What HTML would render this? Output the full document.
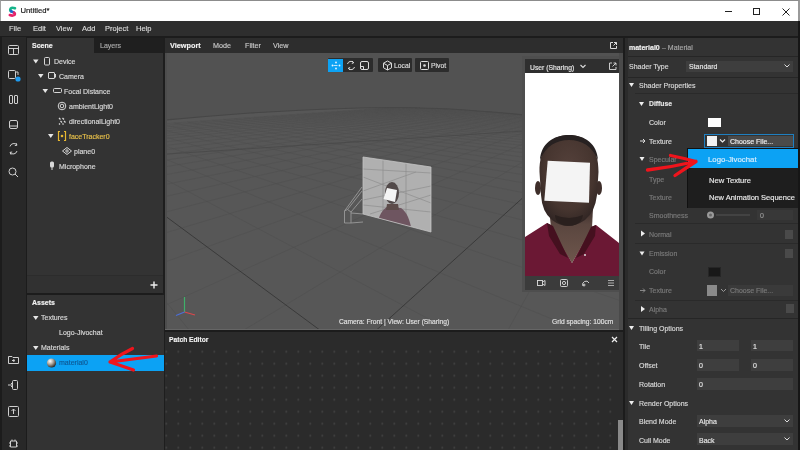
<!DOCTYPE html>
<html><head><meta charset="utf-8">
<style>
*{box-sizing:border-box;margin:0;padding:0}
html,body{width:800px;height:450px;overflow:hidden;background:#1e1e1e;font-family:"Liberation Sans",sans-serif;}
body{will-change:transform}
.a{position:absolute}
svg{position:absolute;overflow:visible}
.t{position:absolute;white-space:nowrap;color:#dadada;font-size:7px;line-height:9px;-webkit-text-stroke:0.15px currentColor}
.b{font-weight:bold;color:#f2f2f2}
.d{color:#7a7a7a}
#title{left:0;top:0;width:800px;height:21px;background:#fff;border-top:1px solid #8c8c8c;border-right:2px solid #9a9a9a;border-left:1px solid #a0a0a0}
#menu{left:0;top:21px;width:800px;height:15px;background:#2e2e2e}
#side{left:0;top:37px;width:27px;height:413px;background:#282828;border-left:2px solid #1c1c1c;border-right:1px solid #1c1c1c}
#scene{left:27px;top:38px;width:136px;height:255px;background:#333}
#layers{left:94px;top:38px;width:69px;height:15px;background:#1f1f1f}
#assets{left:27px;top:294px;width:137px;height:156px;background:#333}
#vp{left:165px;top:53px;width:454px;height:277px;background:#565656;overflow:hidden}
#vph{left:165px;top:38px;width:458px;height:15px;background:#2d2d2d}
#patch{left:165px;top:332px;width:458px;height:118px;background:#262626}
#right{left:625px;top:38px;width:175px;height:412px;background:#333}
</style></head><body>
<!-- title bar -->
<div id="title" class="a">
  <svg style="left:0;top:0" width="20" height="20">
    <path d="M14 7.3 Q11 6 9.6 7.6 Q8.7 9 10 10.2" fill="none" stroke="#14b489" stroke-width="2.6" stroke-linecap="round"/>
    <path d="M10 10.2 L13 11.6" fill="none" stroke="#1a6ad0" stroke-width="2.6" stroke-linecap="round"/>
    <path d="M13 11.6 Q14.6 12.8 13.4 14 Q11.5 15.2 8.8 14" fill="none" stroke="#e6246a" stroke-width="2.6" stroke-linecap="round"/>
  </svg>
  <div class="t" style="left:19.5px;top:5px;color:#111;font-size:7.7px;line-height:10px">Untitled*</div>
  <div class="a" style="left:724px;top:10px;width:7px;height:1px;background:#222"></div>
  <div class="a" style="left:752px;top:7px;width:7px;height:7px;border:1px solid #222"></div>
  <svg style="left:781px;top:7px" width="8" height="8"><path d="M0.5 0.5 L7.5 7.5 M7.5 0.5 L0.5 7.5" stroke="#222" stroke-width="1"/></svg>
</div>
<!-- menu -->
<div id="menu" class="a">
  <div class="t" style="left:9px;top:3px;font-size:7.5px">File</div>
  <div class="t" style="left:33px;top:3px;font-size:7.5px">Edit</div>
  <div class="t" style="left:56px;top:3px;font-size:7.5px">View</div>
  <div class="t" style="left:82px;top:3px;font-size:7.5px">Add</div>
  <div class="t" style="left:105px;top:3px;font-size:7.5px">Project</div>
  <div class="t" style="left:136px;top:3px;font-size:7.5px">Help</div>
</div>
<div class="a" style="left:0;top:36px;width:800px;height:2px;background:#1c1c1c"></div>
<!-- left sidebar -->
<div id="side" class="a"></div>
<!-- scene panel -->
<div id="scene" class="a"></div>
<div id="layers" class="a"></div>
<div class="t b" style="left:32px;top:41px">Scene</div>
<div class="t" style="left:100px;top:41px;color:#aaa">Layers</div>
<!-- tree -->
<svg style="left:0;top:0" width="800" height="450">
  <g fill="#e6e6e6">
    <path d="M33 59.5 L38.5 59.5 L35.75 63.5Z"/>
    <path d="M38 74 L43.5 74 L40.75 78Z"/>
    <path d="M42.5 89 L48 89 L45.25 93Z"/>
    <path d="M48 134 L53.5 134 L50.75 138Z"/>
  </g>
  <g fill="none" stroke="#d8d8d8" stroke-width="1">
    <rect x="44.5" y="57.5" width="5" height="7.5" rx="1"/>
    <rect x="48.5" y="72.5" width="6" height="6" rx="0.5"/><path d="M55.5 74 V77.5"/>
    <rect x="53.5" y="88.5" width="8" height="4" rx="1"/>
    <circle cx="62" cy="106" r="3.8"/><circle cx="62" cy="106" r="1.8"/>
    <path d="M59 118 L60.5 119.5 M62.5 118 L64 119.5 M60.5 121 L62 122.5 M64 121 L65.5 122.5 M59 123.5 L60 124.5 M62.5 123.5 L63.5 124.5" stroke-width="1.3"/>
    <circle cx="67" cy="151" r="1.2"/><path d="M62.5 151 L67 147.5 L71.5 151 L67 154.5Z"/>
  </g>
  <g fill="none" stroke="#e8b830" stroke-width="1">
    <path d="M60 131.5 H58.5 V140.5 H60 M64 131.5 H65.5 V140.5 H64" stroke-width="1.2"/>
  </g>
  <circle cx="62" cy="136" r="1.3" fill="#e8b830"/>
  <rect x="50" y="161.5" width="4" height="6" rx="1.5" fill="#d8d8d8"/>
  <path d="M52 167 V170" stroke="#d8d8d8" stroke-width="1"/>
</svg>
<div class="t" style="left:54px;top:57px">Device</div>
<div class="t" style="left:59px;top:72px">Camera</div>
<div class="t" style="left:64px;top:87px">Focal Distance</div>
<div class="t" style="left:69px;top:102px">ambientLight0</div>
<div class="t" style="left:69px;top:117px">directionalLight0</div>
<div class="t" style="left:69px;top:132px;color:#e8c04a">faceTracker0</div>
<div class="t" style="left:74px;top:147px">plane0</div>
<div class="t" style="left:59px;top:162px">Microphone</div>
<!-- sidebar icons -->
<svg style="left:0;top:0" width="30" height="450">
  <g fill="none" stroke="#cfcfcf" stroke-width="1">
    <rect x="8.5" y="45.5" width="10" height="9" rx="1"/><path d="M8.5 48.5 H18.5 M13.5 48.5 V54.5"/>
    <rect x="8.5" y="70.5" width="7" height="8" rx="1"/><path d="M15.5 72 L18 72 V75"/>
    <rect x="9.5" y="95.5" width="3" height="8" rx="0.5"/><rect x="14.5" y="95.5" width="3" height="8" rx="0.5"/>
    <rect x="9.5" y="120.5" width="8" height="8" rx="1.5"/><path d="M9.5 126 H17.5"/>
    <path d="M10 146.5 A4 4 0 0 1 17 145 M17 151 A4 4 0 0 1 10 152.5"/><path d="M16 143 L17 145.2 L14.8 145.6 M11 154.6 L10 152.4 L12.2 152"/>
    <circle cx="12.5" cy="171.5" r="3.5"/><path d="M15 174 L18 177"/>
    <path d="M8.5 356.5 H12 L13 357.5 H18.5 V363.5 H8.5Z"/><path d="M12 360.5 L14.5 360.5 M13.5 359 L14.5 360.5 L13.5 362"/>
    <rect x="12.5" y="380.5" width="5" height="9" rx="1"/><path d="M8 385 H13 M11 383 L13 385 L11 387"/>
    <rect x="8.5" y="406.5" width="10" height="10" rx="1"/><path d="M13.5 409 V414 M11.5 411 L13.5 409 L15.5 411"/>
    <path d="M10.5 441 H16.5 V447 H10.5Z M9 443 H10.5 M16.5 443 H18 M9 446 H10.5 M16.5 446 H18 M12 439.5 V441 M15 439.5 V441"/>
  </g>
  <circle cx="18" cy="79" r="2.6" fill="#1e9bf0"/>
</svg>
<div class="a" style="left:27px;top:275px;width:136px;height:18px;background:#313131;border-top:1px solid #2c2c2c"></div>
<svg style="left:150px;top:281px" width="8" height="8"><path d="M4 0.5 V7.5 M0.5 4 H7.5" stroke="#eee" stroke-width="1.4"/></svg>
<div class="a" style="left:27px;top:293px;width:135px;height:2px;background:#1c1c1c"></div>
<div id="assets" class="a" style="top:295px;height:155px"></div>
<div class="t b" style="left:32px;top:298px">Assets</div>
<svg style="left:0;top:0" width="200" height="450">
  <path d="M33 316 L38.5 316 L35.75 320Z M33 346 L38.5 346 L35.75 350Z" fill="#e6e6e6"/>
</svg>
<div class="t" style="left:41px;top:313px">Textures</div>
<div class="t" style="left:59px;top:328px">Logo-Jivochat</div>
<div class="t" style="left:41px;top:343px">Materials</div>
<div class="a" style="left:27px;top:355px;width:137px;height:16px;background:#0ca2f4"></div>
<svg style="left:46px;top:357px" width="12" height="12">
  <defs><radialGradient id="sph" cx="0.35" cy="0.3" r="0.75"><stop offset="0" stop-color="#fff"/><stop offset="0.45" stop-color="#b0a89e"/><stop offset="1" stop-color="#1e1e1e"/></radialGradient></defs>
  <circle cx="5.5" cy="6" r="4.6" fill="url(#sph)"/>
</svg>
<div class="t" style="left:59px;top:358px;color:#0e5a96">material0</div>
<!-- red arrow (assets) -->
<svg style="left:0;top:0" width="200" height="450">
  <path d="M156.5 356 Q133 359 110 362 M110 362 Q121 354 132.5 348.5 M110 362 Q122 366 133.5 370" fill="none" stroke="#f0141c" stroke-width="3.2" stroke-linecap="round" stroke-linejoin="round"/>
</svg>
<!-- viewport -->
<div id="vph" class="a"></div>
<div class="t b" style="left:170px;top:41px;font-size:7.3px">Viewport</div>
<div class="t" style="left:213px;top:41px;font-size:7.2px;color:#c8c8c8">Mode</div>
<div class="t" style="left:245px;top:41px;font-size:7.2px;color:#c8c8c8">Filter</div>
<div class="t" style="left:273px;top:41px;font-size:7.2px;color:#c8c8c8">View</div>
<svg style="left:609px;top:41px" width="9" height="9"><path d="M4 1.5 H1.5 V7.5 H7.5 V5 M4.5 4.5 L7.5 1.5 M5 1.5 H7.5 V4" fill="none" stroke="#ddd" stroke-width="1"/></svg>
<div class="a" style="left:165px;top:53px;width:458px;height:277px;background:#4d4d4d"></div>
<svg style="left:0;top:0" width="800" height="450">
  <defs><clipPath id="fl"><path d="M167 119.8 Q210 116 250 113 Q300 110 344 108.5 Q375 107.5 400 107.5 Q430 108 450 109 Q490 111.5 524 115 L619 123 L619 329 L167 329Z"/></clipPath></defs>
  <rect x="167" y="53" width="452" height="276" fill="#525252"/>
  <path d="M167 119.8 Q210 116 250 113 Q300 110 344 108.5 Q375 107.5 400 107.5 Q430 108 450 109 Q490 111.5 524 115 L619 123 L619 329 L167 329Z" fill="#575757"/>
  <g clip-path="url(#fl)">
    <path d="M-53.7 138.9 L-807.4 1072.8 M-24.3 136.9 L-327.2 1298.0 M2.8 135.0 L328.0 1290.1 M27.7 133.2 L788.9 1060.9 M72.2 130.1 L1132.6 691.8 M92.1 128.7 L1200.9 587.6 M110.7 127.4 L1246.8 513.7 M128.0 126.2 L1280.9 459.1 M144.3 125.0 L1308.1 417.4 M159.5 123.9 L1330.9 384.5 M173.9 122.9 L1350.6 358.0 M187.4 122.0 L1368.1 336.1 M200.2 121.1 L1383.9 317.7 M212.2 120.2 L1398.4 302.1 M223.6 119.4 L1411.7 288.7 M234.5 118.7 L1424.0 276.9 M244.8 117.9 L1435.5 266.6 M254.5 117.3 L1446.3 257.5 M263.9 116.6 L1456.5 249.4 M272.7 116.0 L1466.1 242.0 M281.2 115.4 L1475.2 235.4 M289.3 114.8 L1483.8 229.4 M297.0 114.3 L1492.0 223.9 M304.4 113.7 L1499.8 218.9 M311.5 113.2 L1507.2 214.3 M318.3 112.8 L1514.3 210.0 M324.8 112.3 L1521.1 206.0 M331.1 111.9 L1527.7 202.4 M337.1 111.4 L1533.9 198.9 M342.9 111.0 L1539.9 195.7 M348.5 110.6 L1545.7 192.7 M353.8 110.3 L1551.2 189.9 M359.0 109.9 L1556.5 187.3 M364.0 109.6 L1561.7 184.8 M368.8 109.2 L1566.6 182.4 M373.5 108.9 L1571.4 180.2 M378.0 108.6 L1576.0 178.1 M382.4 108.3 L1580.4 176.1 M386.6 108.0 L1584.8 174.2 M390.7 107.7 L1588.9 172.4 M394.6 107.4 L1592.9 170.6 M398.4 107.1 L1596.8 169.0 M402.1 106.9 L1600.6 167.4 M405.7 106.6 L1604.3 165.9 M673.7 119.8 L1548.3 941.6 M657.3 119.0 L1216.7 1180.6 M641.6 118.2 L624.9 1318.1 M626.6 117.5 L41.6 1165.2 M598.7 116.1 L-428.9 735.8 M585.6 115.5 L-508.0 609.5 M573.1 114.9 L-555.8 521.9 M561.1 114.3 L-588.4 458.8 M549.5 113.7 L-612.9 411.5 M538.5 113.1 L-632.6 374.9 M527.8 112.6 L-649.3 345.8 M517.6 112.1 L-663.9 322.1 M507.7 111.6 L-677.0 302.4 M498.2 111.2 L-689.0 285.8 M489.1 110.7 L-700.1 271.7 M480.2 110.3 L-710.5 259.4 M471.7 109.8 L-720.2 248.8 M463.5 109.4 L-729.5 239.3 M455.5 109.0 L-738.3 231.0 M447.8 108.7 L-746.7 223.5 M440.4 108.3 L-754.7 216.8 M433.2 107.9 L-762.4 210.7 M426.2 107.6 L-769.9 205.1 M419.4 107.3 L-777.0 200.1 M412.9 106.9 L-783.9 195.4 M406.5 106.6 L-790.5 191.1" stroke="#4f4f4f" stroke-width="0.5" fill="none"/>
    <path d="M50.8 131.6 L1016.5 843.9 M612.4 116.8 L-277.9 921.4" stroke="#3a3a3a" stroke-width="1" fill="none"/>
  </g>
  <path d="M167 119.8 Q210 116 250 113 Q300 110 344 108.5 Q375 107.5 400 107.5 Q430 108 450 109 Q490 111.5 524 115 L619 123" stroke="#474747" stroke-width="1.2" fill="none"/>
  <path d="M167 154 L524 131" stroke="#4a4a4a" stroke-width="0.9" fill="none" clip-path="url(#fl)"/>
</svg>


<!-- toolbar -->
<div class="a" style="left:328px;top:58px;width:45px;height:14px;background:#2c2c2c;border-radius:1px"></div>
<div class="a" style="left:328px;top:59px;width:15px;height:12.5px;background:#0ca2f4"></div>
<div class="a" style="left:378px;top:58px;width:34px;height:14px;background:#2c2c2c;border-radius:1px"></div>
<div class="a" style="left:415px;top:58px;width:34px;height:14px;background:#2c2c2c;border-radius:1px"></div>
<svg style="left:0;top:0" width="800" height="450">
  <g stroke="#e8f6ff" stroke-width="0.8" fill="none"><path d="M333.5 65.5 H337.5"/></g>
  <g fill="#e8f6ff"><circle cx="336" cy="62.5" r="0.9"/><circle cx="336" cy="68.5" r="0.9"/><circle cx="332.5" cy="65.5" r="0.9"/><circle cx="339.5" cy="65.5" r="0.9"/></g>
  <g stroke="#ddd" stroke-width="1" fill="none">
    <path d="M347.5 64 A3.5 3.5 0 0 1 353.5 62.5 M354.5 67 A3.5 3.5 0 0 1 348.5 68.5"/>
    <path d="M352 61 L353.8 62.7 L351.8 63.5 M350 70 L348.2 68.3 L350.2 67.5"/>
    <rect x="360.5" y="61.5" width="8" height="8" rx="1.5"/><path d="M360.5 66.5 H363.5 V69.5"/>
    <path d="M387.5 61 L391.5 63.2 V67.8 L387.5 70 L383.5 67.8 V63.2Z M383.5 63.2 L387.5 65.5 L391.5 63.2 M387.5 65.5 V70"/>
    <rect x="420.5" y="61.5" width="8" height="8" rx="1"/>
  </g>
  <circle cx="424.5" cy="65.5" r="1.3" fill="#ddd"/>
</svg>
<div class="t" style="left:394px;top:61px;font-size:6.8px;color:#ddd">Local</div>
<div class="t" style="left:431px;top:61px;font-size:6.8px;color:#ddd">Pivot</div>
<!-- plane + frustum -->
<svg style="left:0;top:0" width="800" height="450">
  <defs><clipPath id="pl"><path d="M363 157 L431 167 L431 232 L363 214Z"/></clipPath></defs>
  <g stroke="#9a9a9a" stroke-width="0.9" fill="none">
    <path d="M344.5 211 L347.5 209.5 L351 212 L351 223 L344.5 223Z M344.5 211 L362 187 M347.5 209.5 L362 191 M351 212 L362 199 M351 213 L363 214 M351 223 L363 222"/>
  </g>
  <path d="M363 157 L431 167 L431 232 L363 214Z" fill="#b0b0b0"/>
  <g clip-path="url(#pl)">
    <g stroke="#8e8e8e" stroke-width="0.7" fill="none">
      <path d="M363 169 L431 173 M363 191 L416 172 M363 200 L431 186 M363 205 L431 212 M363 177 L431 203 M383 159 L383 219 M406 163 L406 225 M370 214 L431 195"/>
    </g>
    <path d="M376 232 Q378 212 387 207 L401 208 Q409 213 412 232Z" fill="#6e5560"/>
    <ellipse cx="392" cy="193" rx="7" ry="11" fill="#524a4a"/>
    <path d="M387 204 L398 204 L399 210 L386 210Z" fill="#5d4c4a"/>
    <path d="M387 188 L397 190 L395 202 L383.5 199Z" fill="#f4f4f4"/>
  </g>
  <path d="M363 157 L431 167 L431 232 L363 214Z" fill="none" stroke="#c4c4c4" stroke-width="0.8"/>
  <!-- gizmo -->
  <path d="M184.5 312 V297" stroke="#3fb06a" stroke-width="1.2"/>
  <path d="M184.5 312 L195 315" stroke="#d9484c" stroke-width="1.2"/>
  <path d="M184.5 312 L176 315.5" stroke="#4c6fd9" stroke-width="1.2"/>
</svg>
<div class="t" style="left:339px;top:317px;font-size:6.7px;color:#e0e0e0">Camera: Front | View: User (Sharing)</div>
<div class="t" style="left:552px;top:317px;font-size:6.7px;color:#e0e0e0">Grid spacing: 100cm</div>

<!-- simulator -->
<div class="a" style="left:522px;top:56px;width:98px;height:236px;background:#4e4e4e"></div>
<div class="a" style="left:525px;top:59px;width:94px;height:14px;background:#2f2f2f"></div>
<div class="t" style="left:530px;top:62.5px;font-size:6.8px;color:#e6e6e6">User (Sharing)</div>
<svg style="left:0;top:0" width="800" height="450">
  <path d="M580.5 65 L583 67.5 L585.5 65" stroke="#ddd" stroke-width="1.1" fill="none"/>
  <path d="M612 63 H609.5 V69.5 H616 V67 M612.5 66.5 L616 63 M613.5 63 H616 V65.5" fill="none" stroke="#ddd" stroke-width="0.9"/>
</svg>
<div class="a" style="left:525px;top:73px;width:94px;height:203px;background:#fff;overflow:hidden">
  <svg style="left:0;top:0" width="94" height="203" viewBox="525 73 94 203">
    <defs>
      <radialGradient id="skin" cx="0.5" cy="0.4" r="0.65"><stop offset="0" stop-color="#56423c"/><stop offset="0.65" stop-color="#46352f"/><stop offset="1" stop-color="#2c2221"/></radialGradient>
      <linearGradient id="neck" x1="0" y1="0" x2="0" y2="1"><stop offset="0" stop-color="#3a2b28"/><stop offset="0.3" stop-color="#5a463f"/><stop offset="1" stop-color="#6e564c"/></linearGradient>
    </defs>
    <!-- shirt -->
    <path d="M525 237 L547 223 L553 226 L572 263 L591 227 L596 225 L619 243 L619 276 L525 276Z" fill="#6b1834"/>
    <!-- neck -->
    <path d="M549 208 L593 208 L592 228 L572 263 L551 228Z" fill="url(#neck)"/>
    <path d="M547 223 L553 226 L568 258 L560 254 L549 236Z M596 225 L591 227 L576 258 L584 254 L595 236Z" fill="#45101f"/>
    <circle cx="585" cy="255" r="1" fill="#ddd"/>
    <!-- ears -->
    <ellipse cx="538" cy="188" rx="3" ry="7" fill="#3e2e2a"/>
    <ellipse cx="599" cy="188" rx="3" ry="7" fill="#3e2e2a"/>
    <!-- head -->
    <path d="M539.5 172 C539 147 552 135 569 135 C586 135 599 147 598.5 172 L597 195 Q595 212 585 220 Q576 226 568 226 Q560 226 552 220 Q542 212 541 195Z" fill="url(#skin)"/>
    <path d="M540 160 C541 144 553 135 569 135 C585 135 597 144 598 160 C592 146 582 140 569 140 C556 140 546 146 540 160Z" fill="#272121"/>
    <path d="M555 215 Q569 221 583 215 Q582 222 576 224.5 Q569 227 562 224.5 Q555 222 555 215Z" fill="#2a201e"/>
    <!-- white face square -->
    <path d="M547.7 160.7 L590 162.7 L589 202.7 L544.3 200.7Z" fill="#f4f4f4"/>
  </svg>
</div>
<div class="a" style="left:525px;top:276px;width:94px;height:14px;background:#3b3b3b"></div>
<svg style="left:0;top:0" width="800" height="450">
  <g fill="none" stroke="#ddd" stroke-width="0.9">
    <rect x="537.5" y="280.5" width="5" height="5"/><path d="M542.5 282 L545 280.5 V285.5 L542.5 284"/>
    <rect x="560.5" y="279.5" width="7" height="7" rx="1"/><circle cx="564" cy="283" r="1.6"/>
    <path d="M583 286 A3 3 0 1 1 589 283"/><circle cx="584" cy="285" r="1"/>
    <path d="M608 280.5 H614 M608 283 H614 M608 285.5 H614" stroke-width="0.7"/>
  </g>
</svg>
<div class="a" style="left:165px;top:328.5px;width:458px;height:1.5px;background:#666"></div>
<div class="a" style="left:165px;top:330px;width:458px;height:2px;background:#1c1c1c"></div>
<div class="a" style="left:619px;top:53px;width:4px;height:277px;background:#4a4a4a"></div>
<div class="a" style="left:623px;top:38px;width:2px;height:412px;background:#1c1c1c"></div>

<!-- patch editor -->
<div class="a" style="left:165px;top:332px;width:458px;height:118px;background:#2b2b2b"></div>
<svg style="left:165px;top:332px" width="454" height="118">
  <defs><pattern id="dots" x="0" y="6.4" width="12" height="12" patternUnits="userSpaceOnUse">
    <path d="M1.3 0.3 V2.3 M0.3 1.3 H2.3" stroke="#444" stroke-width="0.8"/>
  </pattern></defs>
  <rect x="0" y="17" width="454" height="101" fill="url(#dots)"/>
</svg>
<div class="t b" style="left:169px;top:335px;font-size:6.7px">Patch Editor</div>
<svg style="left:611px;top:336px" width="7" height="7"><path d="M1 1 L6 6 M6 1 L1 6" stroke="#eee" stroke-width="1.2"/></svg>
<div class="a" style="left:618px;top:420px;width:5px;height:30px;background:#8a8a8a"></div>

<div id="right" class="a"></div>
<!-- right panel -->
<div class="a" style="left:625px;top:38px;width:3px;height:412px;background:#2b2b2b"></div>
<div class="t b" style="left:629px;top:43px;font-size:7px">material0</div>
<div class="t" style="left:662px;top:43px;font-size:7px;color:#a8a8a8">– Material</div>
<div class="a" style="left:628px;top:56px;width:172px;height:1px;background:#262626"></div>
<div class="t" style="left:629px;top:62px">Shader Type</div>
<div class="a" style="left:686px;top:61px;width:107px;height:11px;background:#3e3e3e"></div>
<div class="t" style="left:689px;top:62px;color:#e6e6e6">Standard</div>
<div class="a" style="left:628px;top:77px;width:172px;height:1px;background:#262626"></div>
<div class="t" style="left:639px;top:81px">Shader Properties</div>
<div class="a" style="left:635px;top:93px;width:165px;height:1px;background:#2a2a2a"></div>
<div class="t b" style="left:649px;top:99px;color:#e6e6e6;font-size:6.8px">Diffuse</div>
<div class="t" style="left:649px;top:118px">Color</div>
<div class="a" style="left:708px;top:118px;width:13px;height:9px;background:#fff"></div>
<div class="t" style="left:649px;top:137px">Texture</div>
<div class="a" style="left:704px;top:134px;width:90px;height:14px;border:1px solid #1f7fc0;background:#333"></div>
<div class="a" style="left:707px;top:136px;width:10px;height:10px;background:#f2f2f2"></div>
<div class="a" style="left:728px;top:136px;width:65px;height:10px;background:#4a4a4a"></div>
<div class="t" style="left:730px;top:137px;color:#f0f0f0">Choose File...</div>
<div class="t d" style="left:649px;top:155px">Specular</div>
<div class="t d" style="left:649px;top:175px">Type</div>
<div class="t d" style="left:649px;top:193px">Texture</div>
<div class="t d" style="left:649px;top:211px">Smoothness</div>
<div class="a" style="left:757px;top:210px;width:36px;height:10px;background:#383838"></div>
<div class="t d" style="left:760px;top:211px;color:#9a9a9a">0</div>
<div class="a" style="left:635px;top:223px;width:165px;height:1px;background:#2a2a2a"></div>
<div class="t d" style="left:649px;top:230px">Normal</div>
<div class="a" style="left:785px;top:230px;width:8px;height:9px;background:#4a4a4a"></div>
<div class="a" style="left:635px;top:243px;width:165px;height:1px;background:#2a2a2a"></div>
<div class="t d" style="left:649px;top:249px">Emission</div>
<div class="a" style="left:785px;top:249px;width:8px;height:9px;background:#4a4a4a"></div>
<div class="t d" style="left:649px;top:267px">Color</div>
<div class="a" style="left:708px;top:267px;width:13px;height:10px;background:#181818;border:1px solid #262626"></div>
<div class="t d" style="left:649px;top:286px">Texture</div>
<div class="a" style="left:707px;top:285px;width:10px;height:11px;background:#8a8a8a"></div>
<div class="a" style="left:728px;top:285px;width:65px;height:11px;background:#3a3a3a"></div>
<div class="t d" style="left:730px;top:286px">Choose File...</div>
<div class="a" style="left:635px;top:300px;width:165px;height:1px;background:#2a2a2a"></div>
<div class="t d" style="left:649px;top:305px">Alpha</div>
<div class="a" style="left:786px;top:304px;width:8px;height:9px;background:#4a4a4a"></div>
<div class="a" style="left:628px;top:318px;width:172px;height:1px;background:#262626"></div>
<div class="t" style="left:639px;top:324px">Tilling Options</div>
<div class="t" style="left:639px;top:342px">Tile</div>
<div class="a" style="left:697px;top:340px;width:42px;height:11px;background:#3e3e3e"></div>
<div class="a" style="left:751px;top:340px;width:42px;height:11px;background:#3e3e3e"></div>
<div class="t" style="left:699px;top:342px;color:#e6e6e6">1</div>
<div class="t" style="left:753px;top:342px;color:#e6e6e6">1</div>
<div class="t" style="left:639px;top:361px">Offset</div>
<div class="a" style="left:697px;top:359px;width:42px;height:12px;background:#3e3e3e"></div>
<div class="a" style="left:751px;top:359px;width:42px;height:12px;background:#3e3e3e"></div>
<div class="t" style="left:699px;top:361px;color:#e6e6e6">0</div>
<div class="t" style="left:753px;top:361px;color:#e6e6e6">0</div>
<div class="t" style="left:639px;top:380px">Rotation</div>
<div class="a" style="left:697px;top:378px;width:96px;height:12px;background:#3e3e3e"></div>
<div class="t" style="left:699px;top:380px;color:#e6e6e6">0</div>
<div class="t" style="left:639px;top:399px">Render Options</div>
<div class="t" style="left:639px;top:417px">Blend Mode</div>
<div class="a" style="left:697px;top:415px;width:96px;height:12px;background:#3e3e3e"></div>
<div class="t" style="left:699px;top:417px;color:#e6e6e6">Alpha</div>
<div class="t" style="left:639px;top:436px">Cull Mode</div>
<div class="a" style="left:697px;top:433px;width:96px;height:12px;background:#3e3e3e"></div>
<div class="t" style="left:699px;top:436px;color:#e6e6e6">Back</div>
<svg style="left:0;top:0" width="800" height="450">
  <g fill="#eee">
    <path d="M629 83 L634 83 L631.5 87Z"/>
    <path d="M639 102 L644 102 L641.5 106Z"/>
    <path d="M629 326 L634 326 L631.5 330Z"/>
    <path d="M629 401 L634 401 L631.5 405Z"/>
    <path d="M641 230.5 L645 233.5 L641 236.5Z"/>
    <path d="M639.5 251.5 L644.5 251.5 L642 255.5Z"/>
    <path d="M641 306 L645 309 L641 312Z"/>
    <path d="M639.5 157 L644.5 157 L642 161Z"/>
  </g>
  <g fill="none" stroke-width="1">
    <path d="M784.5 64.5 L787 67 L789.5 64.5" stroke="#ddd"/>
    <path d="M784.5 419.5 L787 422 L789.5 419.5" stroke="#ddd"/>
    <path d="M784.5 437.5 L787 440 L789.5 437.5" stroke="#ddd"/>
    <path d="M720 139.5 L722.5 142 L725 139.5" stroke="#eee" stroke-width="1.2"/>
    <path d="M721 289 L723.5 291.5 L726 289" stroke="#999"/>
    <path d="M640 141 H645 M643 139 L645 141 L643 143" stroke="#ddd"/>
    <path d="M640 290.5 H645 M643 288.5 L645 290.5 L643 292.5" stroke="#888"/>
    <path d="M716 215 H750" stroke="#555"/>
  </g>
  <circle cx="710.5" cy="215" r="3.5" fill="#9a9a9a"/>
  <circle cx="710.5" cy="215" r="1.5" fill="#666"/>
</svg>
<!-- dropdown -->
<div class="a" style="left:687px;top:148px;width:113px;height:60px;background:#1e1e1e;border-left:1px solid #111;border-top:1px solid #111"></div>
<div class="a" style="left:688px;top:149px;width:112px;height:19px;background:#0ca2f4"></div>
<div class="t" style="left:708px;top:155px;color:#d8eeff;font-size:7.8px">Logo-Jivochat</div>
<div class="t" style="left:709px;top:175.5px;color:#eaeaea;font-size:7.6px">New Texture</div>
<div class="t" style="left:709px;top:192.5px;color:#eaeaea;font-size:7.5px">New Animation Sequence</div>
<!-- red arrow (right) -->
<svg style="left:0;top:0" width="800" height="450">
  <path d="M647.5 170 Q672 167 696 161.5 M696 161.5 Q683 158 670.5 155.5 M696 161.5 Q686 168 675 175.5" fill="none" stroke="#f0141c" stroke-width="3.3" stroke-linecap="round" stroke-linejoin="round"/>
</svg>

<div class="a" style="left:798px;top:21px;width:2px;height:429px;background:#161616"></div>
</body></html>
